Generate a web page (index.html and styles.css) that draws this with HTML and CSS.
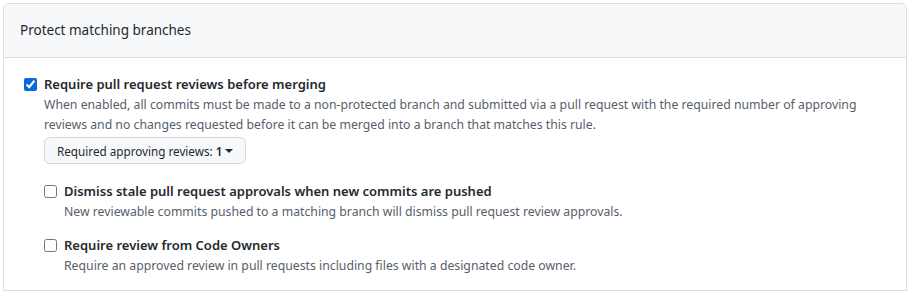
FILE: index.html
```html
<!DOCTYPE html>
<html lang="en">
<head>
    <meta charset="UTF-8">
    <title>Protect matching branches</title>
    <link rel="stylesheet" href="styles.css">
</head>
<body>
    <div class="box">
        <div class="box-header">Protect matching branches</div>
        <div class="box-body">
            <div class="form-checkbox">
                <input type="checkbox" id="requireReviews" checked>
                <div class="form-checkbox-content">
                    <label for="requireReviews">Require pull request reviews before merging</label>
                    <p class="note">When enabled, all commits must be made to a non-protected branch and submitted via a pull request with the required number of approving reviews and no changes requested before it can be merged into a branch that matches this rule.</p>
                    <button class="select-btn">Required approving reviews: <b>1</b> <span class="caret"></span></button>

                    <div class="form-checkbox sub">
                        <input type="checkbox" id="dismissStale">
                        <div class="form-checkbox-content">
                            <label for="dismissStale">Dismiss stale pull request approvals when new commits are pushed</label>
                            <p class="note">New reviewable commits pushed to a matching branch will dismiss pull request review approvals.</p>
                        </div>
                    </div>

                    <div class="form-checkbox sub">
                        <input type="checkbox" id="codeOwners">
                        <div class="form-checkbox-content">
                            <label for="codeOwners">Require review from Code Owners</label>
                            <p class="note">Require an approved review in pull requests including files with a designated code owner.</p>
                        </div>
                    </div>
                </div>
            </div>
        </div>
    </div>
</body>
</html>
```

FILE: styles.css
```css
body {
    font-family: 'Noto Sans', sans-serif;
    color: #24292f;
    background-color: #ffffff;
    margin: 0;
    padding: 3px 5px 0 3px;
}
.box {
    border: 1px solid #d8dee4;
    border-radius: 6px 6px 0 0;
}
.box-header {
    background-color: #f6f8fa;
    border-bottom: 1px solid #d8dee4;
    border-radius: 6px 6px 0 0;
    padding: 16px;
    font-size: 13.5px;
    line-height: 21px;
}
.box-body {
    padding: 16px 16px 14px 20px;
}
.form-checkbox {
    display: flex;
    align-items: flex-start;
    gap: 7px;
}
.form-checkbox input {
    width: 13px;
    height: 13px;
    margin: 4px 0 0 0;
    accent-color: #0969da;
}
.form-checkbox-content {
    flex: 1;
}
.form-checkbox label {
    display: block;
    font-size: 13px;
    font-weight: 600;
    line-height: 21px;
}
.note {
    margin: 0;
    font-size: 12.25px;
    line-height: 20px;
    color: #57606a;
}
.select-btn {
    margin-top: 2px;
    height: 27px;
    padding: 0 12px;
    font-family: inherit;
    font-size: 11.7px;
    color: #24292f;
    background-color: #f6f8fa;
    border: 1px solid #d0d7de;
    border-radius: 6px;
    display: flex;
    align-items: center;
    gap: 3px;
}
.select-btn b {
    font-weight: 600;
}
.caret {
    display: inline-block;
    width: 0;
    height: 0;
    border-top: 4px solid #24292f;
    border-left: 4px solid transparent;
    border-right: 4px solid transparent;
}
.form-checkbox.sub {
    margin-top: 17px;
}
.form-checkbox.sub + .form-checkbox.sub {
    margin-top: 13px;
}
```
